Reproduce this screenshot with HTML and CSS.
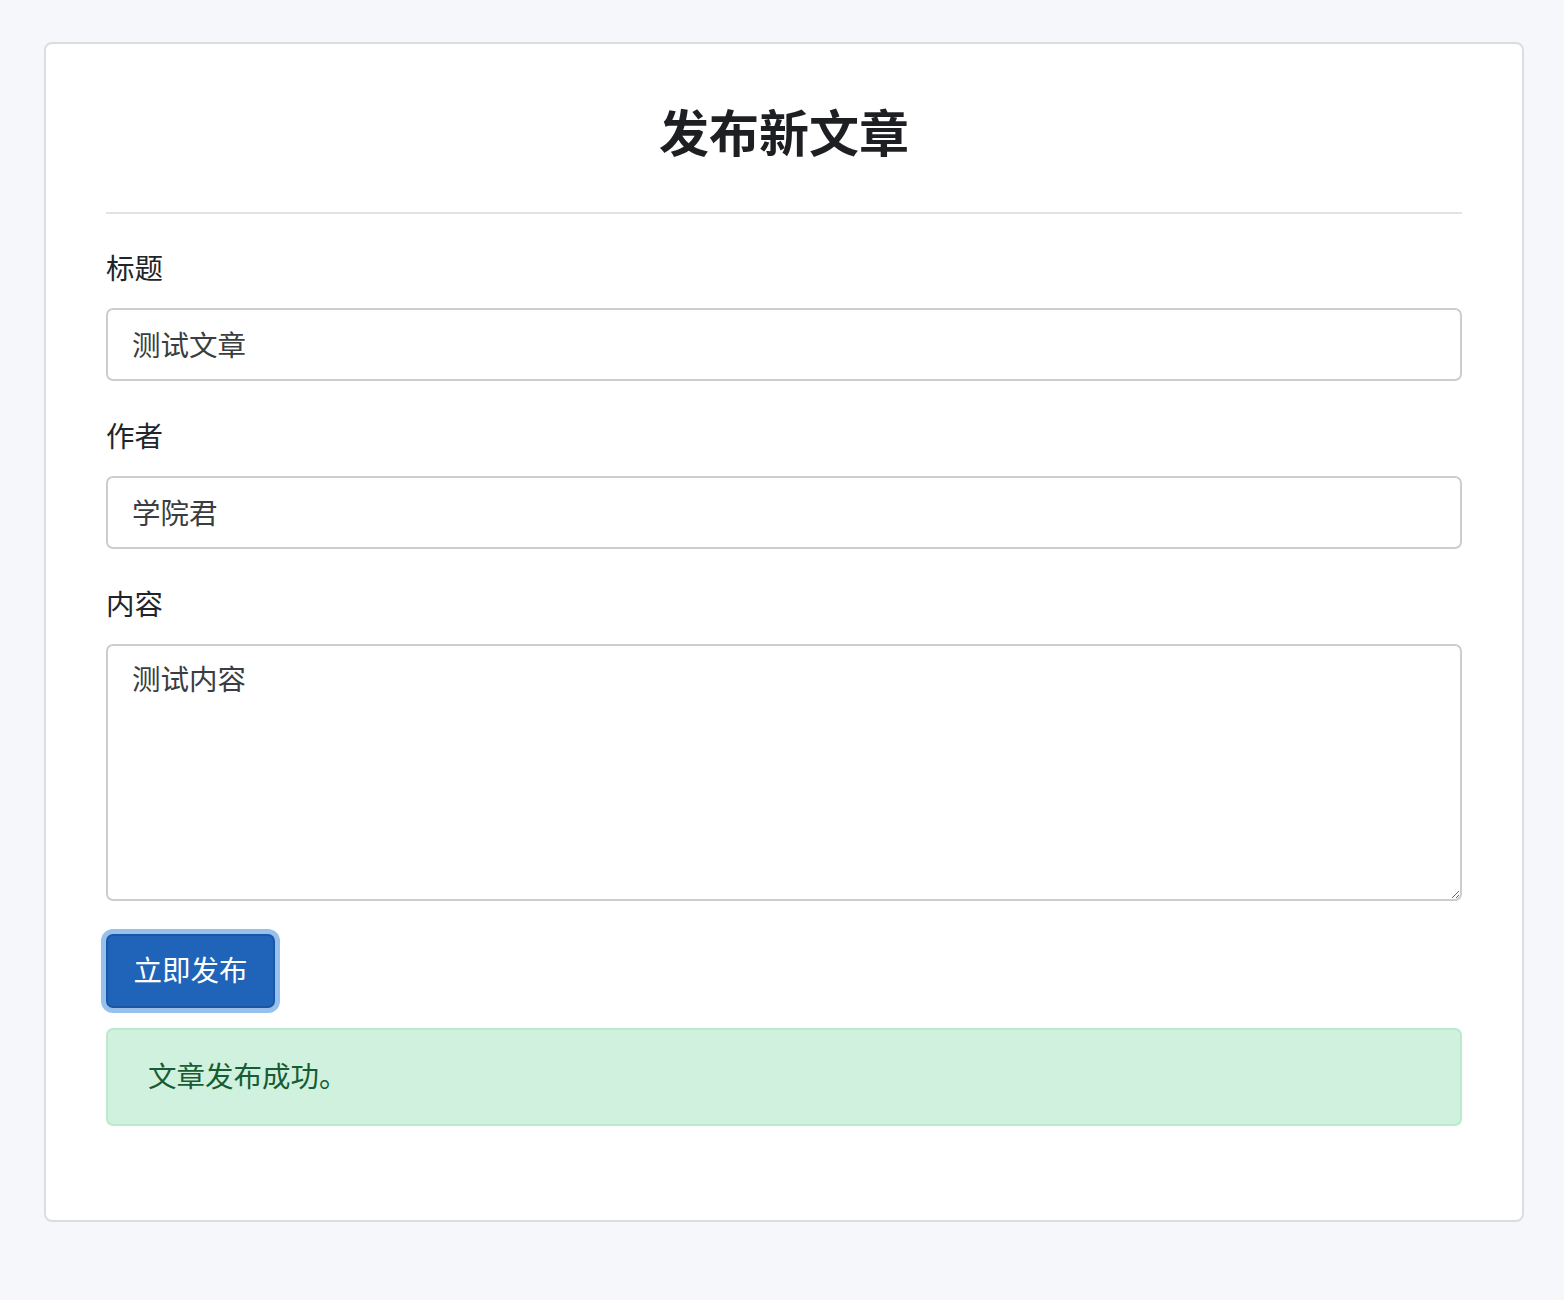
FILE: index.html
```html
<!DOCTYPE html>
<html lang="zh-CN">
<head>
<meta charset="utf-8">
<title>发布新文章</title>
<link rel="stylesheet" href="styles.css">
</head>
<body>
<div class="card">
  <h1 class="title">发布新文章</h1>
  <hr class="divider">
  <form class="form">
    <div class="group">
      <label class="label" for="t">标题</label>
      <input class="control" id="t" type="text" value="测试文章">
    </div>
    <div class="group">
      <label class="label" for="a">作者</label>
      <input class="control" id="a" type="text" value="学院君">
    </div>
    <div class="group">
      <label class="label" for="c">内容</label>
      <textarea class="control area" id="c">测试内容</textarea>
    </div>
    <button class="btn" type="button">立即发布</button>
  </form>
  <div class="alert">文章发布成功。</div>
</div>
</body>
</html>
```

FILE: styles.css
```css
* { box-sizing: border-box; }
html, body { margin: 0; padding: 0; }
body {
  background: #f5f7fa;
  font-family: "Noto Sans CJK SC", "Noto Sans", sans-serif;
  color: #212529;
  padding: 42px 40px 80px 44px;
}
.card {
  width: 1480px;
  background: #fff;
  border: 2px solid #dcdde0;
  border-radius: 8px;
  padding: 60px 60px 94px 60px;
}
.title {
  margin: 0;
  text-align: center;
  font-size: 50px;
  line-height: 52px;
  font-weight: 700;
  color: #1d1f22;
}
.divider {
  border: 0;
  border-top: 2px solid #e2e3e5;
  margin: 56px 0 0 0;
  height: 0;
}
.form { margin-top: 32px; }
.group { margin-bottom: 33px; }
.label {
  display: block;
  font-size: 28.5px;
  line-height: 42px;
  margin-bottom: 20px;
  color: #212529;
}
.control {
  display: block;
  width: 100%;
  height: 73px;
  border: 2px solid #cbcdd1;
  border-radius: 7px;
  padding: 0 24px 2px;
  font-family: inherit;
  font-size: 28.5px;
  color: #3a3d41;
  background: #fff;
  outline: none;
}
.area {
  height: 257px;
  padding-top: 11px;
  line-height: 42px;
  resize: vertical;
}
.btn {
  display: block;
  margin-left: 0;
  width: 169px;
  height: 74px;
  background: #1f64b9;
  color: #fff;
  border: 2px solid #1a56a3;
  border-radius: 7px;
  box-shadow: 0 0 0 5px #97c1ec;
  font-family: inherit;
  font-size: 28.5px;
  padding: 0 0 5px;
}
.alert {
  margin-top: 20px;
  height: 98px;
  background: #d0f1de;
  border: 2px solid #bce9cc;
  border-radius: 7px;
  padding: 0 40px 5px;
  display: flex;
  align-items: center;
  font-size: 28.5px;
  color: #175c32;
}
```
